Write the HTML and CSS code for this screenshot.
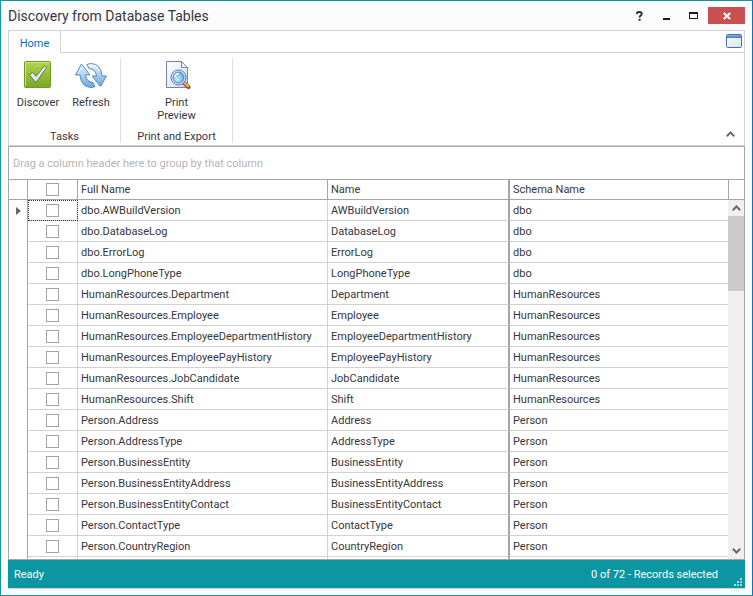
FILE: index.html
```
<!DOCTYPE html>
<html lang="en">
<head>
<meta charset="utf-8">
<title>Discovery from Database Tables</title>
<link rel="stylesheet" href="styles.css">
</head>
<body>
<div class="window">
  <header class="titlebar">
    <h1 class="title">Discovery from Database Tables</h1>
    <button class="win-btn" type="button" aria-label="Help"><svg width="7" height="10" viewBox="0 0 7 10"><path d="M1 3V1.8Q1.6 1 3.4 1Q5.8 1 5.8 2.8Q5.8 3.9 4.6 4.6Q3.6 5.2 3.6 6.6" fill="none" stroke="#2b2b2b" stroke-width="1.8"/><path d="M2.6 7.8h2v2h-2z" fill="#2b2b2b"/></svg></button>
    <button class="win-btn" type="button" aria-label="Minimize"><svg width="9" height="10" viewBox="0 0 9 10"><path d="M1 7h7v2H1z" fill="#1c1c1c"/></svg></button>
    <button class="win-btn" type="button" aria-label="Maximize"><svg width="9" height="10" viewBox="0 0 9 10"><path d="M0 1h9v7H0zM1 3v4h7V3z" fill="#1c1c1c" fill-rule="evenodd"/></svg></button>
    <button class="win-btn close" type="button" aria-label="Close"><svg width="8" height="8" viewBox="0 0 8 8"><path d="M.8 1l6.4 6M7.2 1L.8 7" stroke="#fff" stroke-width="1.9"/></svg></button>
  </header>

  <section class="ribbon">
    <nav class="tabs">
      <button class="tab" type="button">Home</button>
      <span class="tab-fill"></span>
      <button class="icon-btn" type="button" aria-label="Window style"><svg width="16" height="14" viewBox="0 0 16 14"><defs><linearGradient id="wb" x1="0" y1="0" x2="0" y2="1"><stop offset="0" stop-color="#8bb8ec"/><stop offset="1" stop-color="#4477c0"/></linearGradient><linearGradient id="wf" x1="0" y1="0" x2="1" y2="1"><stop offset="0" stop-color="#fff"/><stop offset="1" stop-color="#d5e2f3"/></linearGradient></defs><rect x=".5" y=".5" width="15" height="13" rx="1" fill="url(#wf)" stroke="#466fb0"/><path d="M1 1h14v3H1z" fill="url(#wb)"/><path d="M13 2h1v1h-1z" fill="#e33"/></svg></button>
    </nav>
    <div class="groups">
      <div class="group tasks">
        <div class="commands">
          <button class="command" type="button">
            <svg width="32" height="32" viewBox="0 0 32 32"><defs><linearGradient id="gr" x1="0" y1="0" x2="0" y2="1"><stop offset="0" stop-color="#b4d34d"/><stop offset="1" stop-color="#78a824"/></linearGradient><linearGradient id="ck" x1="0" y1="0" x2="0" y2="1"><stop offset="0" stop-color="#fff"/><stop offset="1" stop-color="#d3deea"/></linearGradient></defs><rect x="2.5" y="3.5" width="26" height="26" rx="1" fill="url(#gr)" stroke="#6c9924"/><path d="M3.5 28V4.5h24" fill="none" stroke="#cce37f"/><path d="M7.5 17l3-2.5 3.5 3.8L22.5 8l2.2 1.2L14.5 24h-1.2z" fill="url(#ck)" stroke="#577b36"/></svg>
            Discover
          </button>
          <button class="command" type="button">
            <svg width="32" height="32" viewBox="0 0 32 32"><defs><linearGradient id="rb" x1="0" y1="0" x2="0" y2="1"><stop offset="0" stop-color="#e8f6fd"/><stop offset="1" stop-color="#6ca7dd"/></linearGradient></defs><g fill="url(#rb)" stroke="#4a7db8" stroke-width=".9" stroke-linejoin="round"><path d="M12 6.500Q14 5.500 16.500 5.500Q26 6.200 27 18H31.500L25.500 28.500L17 18H21.500Q20.500 11 14 10.500Z"/><path d="M20 28.500Q18 29.500 15.500 29.500Q6 28.800 5 17H.5L6.500 6L15 17H10.500Q11.500 24 18 24.500Z"/></g><path d="M14 7.500Q22 6 24.800 14M6.800 9L3 15.300" fill="none" stroke="#fff" opacity=".8"/></svg>
            Refresh
          </button>
        </div>
        <div class="caption">Tasks</div>
      </div>
      <div class="group print">
        <div class="commands">
          <button class="command" type="button">
            <svg width="32" height="32" viewBox="0 0 32 32"><defs><linearGradient id="pg" x1="0" y1="0" x2="1" y2="1"><stop offset="0" stop-color="#fff"/><stop offset="1" stop-color="#d2ddf2"/></linearGradient><radialGradient id="ln" cx=".4" cy=".65" r=".7"><stop offset="0" stop-color="#c9f1ff"/><stop offset="1" stop-color="#51a5e3"/></radialGradient></defs><path d="M5.500 3.500h15l6 6v20h-21z" fill="url(#pg)" stroke="#7283b7"/><path d="M20.500 3.500v6h6z" fill="#eff4fc" stroke="#7283b7"/><path d="M23 25l4.500 4" stroke="#8c5529" stroke-width="4.200" stroke-linecap="round"/><path d="M23 24.500l4 3.500" stroke="#f3b160" stroke-width="2.200" stroke-linecap="round"/><circle cx="17.500" cy="19.500" r="7.500" fill="#e7f1fb" stroke="#5671b2"/><circle cx="17.500" cy="19.500" r="5.500" fill="url(#ln)" stroke="#3f7bc5"/><path d="M14 19q.3-3.500 4-3.500" fill="none" stroke="#fff" stroke-width="1.400"/></svg>
            Print<br>Preview
          </button>
        </div>
        <div class="caption">Print and Export</div>
      </div>
      <button class="collapse" type="button" aria-label="Collapse ribbon"><svg width="9" height="6" viewBox="0 0 9 6"><path d="M.8 5.200l3.700-3.700 3.700 3.700" fill="none" stroke="#6b6b6b" stroke-width="2"/></svg></button>
    </div>
  </section>

  <main class="grid">
    <div class="group-panel">Drag a column header here to group by that column</div>
    <div class="grid-body">
      <div class="table-area">
        <table class="records">
          <colgroup><col class="c-mark"><col class="c-check"><col class="c-full"><col class="c-name"><col></colgroup>
          <thead>
            <tr><th></th><th><input type="checkbox" aria-label="Select all"></th><th>Full Name</th><th>Name</th><th>Schema Name</th></tr>
          </thead>
          <tbody>
            <tr class="current"><td><svg width="5" height="8" viewBox="0 0 5 8"><path d="M0 0l5 4-5 4z" fill="#666"/></svg></td><td><input type="checkbox" aria-label="Select dbo.AWBuildVersion"></td><td>dbo.AWBuildVersion</td><td>AWBuildVersion</td><td>dbo</td></tr>
            <tr><td></td><td><input type="checkbox" aria-label="Select dbo.DatabaseLog"></td><td>dbo.DatabaseLog</td><td>DatabaseLog</td><td>dbo</td></tr>
            <tr><td></td><td><input type="checkbox" aria-label="Select dbo.ErrorLog"></td><td>dbo.ErrorLog</td><td>ErrorLog</td><td>dbo</td></tr>
            <tr><td></td><td><input type="checkbox" aria-label="Select dbo.LongPhoneType"></td><td>dbo.LongPhoneType</td><td>LongPhoneType</td><td>dbo</td></tr>
            <tr><td></td><td><input type="checkbox" aria-label="Select HumanResources.Department"></td><td>HumanResources.Department</td><td>Department</td><td>HumanResources</td></tr>
            <tr><td></td><td><input type="checkbox" aria-label="Select HumanResources.Employee"></td><td>HumanResources.Employee</td><td>Employee</td><td>HumanResources</td></tr>
            <tr><td></td><td><input type="checkbox" aria-label="Select HumanResources.EmployeeDepartmentHistory"></td><td>HumanResources.EmployeeDepartmentHistory</td><td>EmployeeDepartmentHistory</td><td>HumanResources</td></tr>
            <tr><td></td><td><input type="checkbox" aria-label="Select HumanResources.EmployeePayHistory"></td><td>HumanResources.EmployeePayHistory</td><td>EmployeePayHistory</td><td>HumanResources</td></tr>
            <tr><td></td><td><input type="checkbox" aria-label="Select HumanResources.JobCandidate"></td><td>HumanResources.JobCandidate</td><td>JobCandidate</td><td>HumanResources</td></tr>
            <tr><td></td><td><input type="checkbox" aria-label="Select HumanResources.Shift"></td><td>HumanResources.Shift</td><td>Shift</td><td>HumanResources</td></tr>
            <tr><td></td><td><input type="checkbox" aria-label="Select Person.Address"></td><td>Person.Address</td><td>Address</td><td>Person</td></tr>
            <tr><td></td><td><input type="checkbox" aria-label="Select Person.AddressType"></td><td>Person.AddressType</td><td>AddressType</td><td>Person</td></tr>
            <tr><td></td><td><input type="checkbox" aria-label="Select Person.BusinessEntity"></td><td>Person.BusinessEntity</td><td>BusinessEntity</td><td>Person</td></tr>
            <tr><td></td><td><input type="checkbox" aria-label="Select Person.BusinessEntityAddress"></td><td>Person.BusinessEntityAddress</td><td>BusinessEntityAddress</td><td>Person</td></tr>
            <tr><td></td><td><input type="checkbox" aria-label="Select Person.BusinessEntityContact"></td><td>Person.BusinessEntityContact</td><td>BusinessEntityContact</td><td>Person</td></tr>
            <tr><td></td><td><input type="checkbox" aria-label="Select Person.ContactType"></td><td>Person.ContactType</td><td>ContactType</td><td>Person</td></tr>
            <tr><td></td><td><input type="checkbox" aria-label="Select Person.CountryRegion"></td><td>Person.CountryRegion</td><td>CountryRegion</td><td>Person</td></tr>
            <tr><td></td><td></td><td></td><td></td><td></td></tr>
          </tbody>
        </table>
      </div>
      <div class="side">
        <div class="side-head"></div>
        <div class="scrollbar">
          <button class="arrow" type="button" aria-label="Scroll up"><svg width="9" height="6" viewBox="0 0 9 6"><path d="M.8 5.200l3.700-3.700 3.700 3.700" fill="none" stroke="#6b6b6b" stroke-width="2"/></svg></button>
          <div class="track"><div class="thumb"></div></div>
          <button class="arrow" type="button" aria-label="Scroll down"><svg width="9" height="6" viewBox="0 0 9 6"><path d="M.8 .8l3.700 3.700L8.200 .8" fill="none" stroke="#6b6b6b" stroke-width="2"/></svg></button>
        </div>
      </div>
    </div>
  </main>

  <footer class="status">
    <span>Ready</span>
    <span>0 of 72 - Records selected</span>
    <svg class="grip" width="8" height="8" viewBox="0 0 8 8"><path d="M6 0h2v2H6zM3 3h2v2H3zM6 3h2v2H6zM0 6h2v2H0zM3 6h2v2H3zM6 6h2v2H6z" fill="#a4d6da"/></svg>
  </footer>
</div>
</body>
</html>
```
FILE: styles.css
```
:root {
  --teal: #0b96a1;
  --line: #a5a5a5;
  --line-light: #d2d2d2;
}

* { box-sizing: border-box; }

body {
  margin: 0;
  color: #363640;
  font: 11px/13px Tahoma, Roboto, sans-serif;
}

button {
  padding: 0;
  border: 0;
  background: none;
  color: inherit;
  font: inherit;
}

svg { display: block; }

.window {
  display: flex;
  flex-direction: column;
  height: 100vh;
  padding: 0 7px 6px;
  border: 1px solid var(--teal);
  border-right-color: #0a74c4;
  background: #fcfcfc;
}

.titlebar {
  display: flex;
  flex: none;
  align-items: center;
  height: 29px;
}

.title {
  flex: 1;
  margin: 0;
  font-size: 14px;
  font-weight: normal;
  line-height: 20px;
}

.win-btn {
  display: flex;
  align-items: center;
  justify-content: center;
  width: 27px;
  height: 17px;
}

.close {
  width: 37px;
  margin-left: 1px;
  background: #c75050;
}

.ribbon {
  flex: none;
  border: 1px solid var(--line-light);
  background: #fff;
}

.tabs { display: flex; height: 22px; }

.tab {
  width: 52px;
  padding-top: 2px;
  border-right: 1px solid var(--line-light);
  color: #0072c6;
}

.tab-fill { flex: 1; border-bottom: 1px solid var(--line-light); }

.icon-btn {
  padding: 0 2px 1px 0;
  border-bottom: 1px solid var(--line-light);
}

.groups {
  display: flex;
  padding: 5px 0 2px;
}

.group {
  display: flex;
  flex-direction: column;
  justify-content: space-between;
  height: 85px;
  border-right: 1px solid #dedede;
}

.tasks { width: 112px; }
.print { width: 112px; }

.commands { display: flex; justify-content: center; }

.command {
  display: flex;
  flex-direction: column;
  align-items: center;
  width: 53px;
}

.command svg { margin-bottom: 6px; }

.caption { text-align: center; }

.collapse {
  align-self: flex-end;
  margin-left: auto;
  padding: 6px 9px;
}

.grid {
  display: flex;
  flex: 1;
  flex-direction: column;
  min-height: 0;
  border: 1px solid var(--line);
  background: #fff;
}

.group-panel {
  flex: none;
  padding: 10px 4px 9px;
  border-bottom: 1px solid var(--line);
  color: #b4b4b4;
}

.grid-body {
  display: flex;
  flex: 1;
  min-height: 0;
}

.table-area {
  flex: 1;
  min-width: 0;
  overflow: hidden;
}

.records {
  width: 100%;
  border-spacing: 0;
  table-layout: fixed;
}

.c-mark { width: 19px; }
.c-check { width: 50px; }
.c-full { width: 250px; }
.c-name { width: 182px; }

th, td {
  height: 21px;
  padding: 0 3px;
  border: 0 solid var(--line-light);
  border-width: 0 1px 1px 0;
  font-weight: normal;
  text-align: left;
  white-space: nowrap;
}

th {
  height: 20px;
  border-color: var(--line);
}

td:first-child {
  padding-left: 7px;
  border-right-color: var(--line);
  border-bottom: 0;
}

th:nth-child(4), td:nth-child(4) {
  border-right: 2px solid var(--line);
}

th:last-child, td:last-child { border-right: 0; }

.current td:nth-child(2) { outline: 1px dotted #333; outline-offset: -1px; }

input {
  display: block;
  width: 13px;
  height: 13px;
  margin: 0 auto;
  border: 1px solid #a3a3a3;
  background: #fff;
  appearance: none;
}

.side {
  display: flex;
  flex: none;
  flex-direction: column;
  width: 16px;
}

.side-head {
  height: 20px;
  border: solid var(--line);
  border-width: 0 0 1px 1px;
}

.scrollbar {
  display: flex;
  flex: 1;
  flex-direction: column;
  min-height: 0;
  background: #efefef;
}

.arrow {
  display: flex;
  align-items: center;
  justify-content: center;
  height: 16px;
}

.track { flex: 1; }
.thumb { height: 23%; background: #cbcbcb; }

.status {
  position: relative;
  display: flex;
  flex: none;
  align-items: center;
  justify-content: space-between;
  height: 29px;
  padding: 0 27px 0 6px;
  border-bottom: 1px solid var(--line-light);
  background: var(--teal);
  color: #fff;
}

.grip {
  position: absolute;
  right: 3px;
  bottom: 2px;
}
```
